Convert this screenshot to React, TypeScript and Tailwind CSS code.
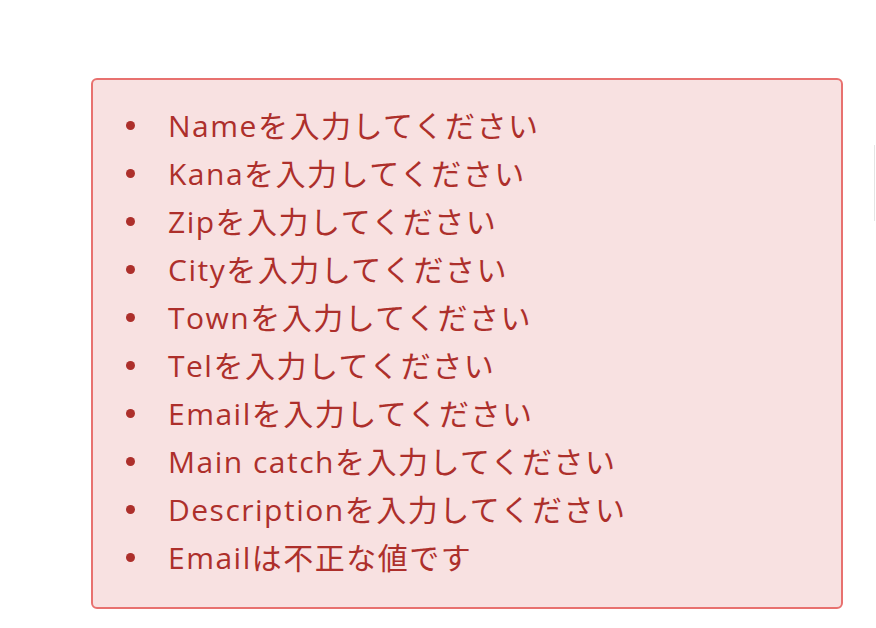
import React from "react";

const items = [
  "Nameを入力してください",
  "Kanaを入力してください",
  "Zipを入力してください",
  "Cityを入力してください",
  "Townを入力してください",
  "Telを入力してください",
  "Emailを入力してください",
  "Main catchを入力してください",
  "Descriptionを入力してください",
  "Emailは不正な値です",
];

export default function App() {
  return (
    <div
      className="relative w-[876px] h-[628px] bg-white overflow-hidden"
      style={{ fontFamily: '"Open Sans", "Noto Sans CJK JP", sans-serif' }}
    >
      <div className="absolute left-[874px] top-[145px] h-[76px] w-px bg-[#e4e4e4]" />
      <div className="pt-[78px] pl-[91px]">
        <div className="w-[752px] h-[531px] rounded-[6px] border-2 border-[#e8716f] bg-[#f8e1e1] pt-[21px] pl-[33px]">
          <ul className="flex flex-col">
            {items.map((t) => (
              <li key={t} className="flex items-center h-[48px] text-[#ad2f2b] text-[30px] tracking-[1.5px]">
                <span className="w-[9px] h-[9px] rounded-full bg-[#ad2f2b] mr-[33px]" />
                <span>{t}</span>
              </li>
            ))}
          </ul>
        </div>
      </div>
    </div>
  );
}
